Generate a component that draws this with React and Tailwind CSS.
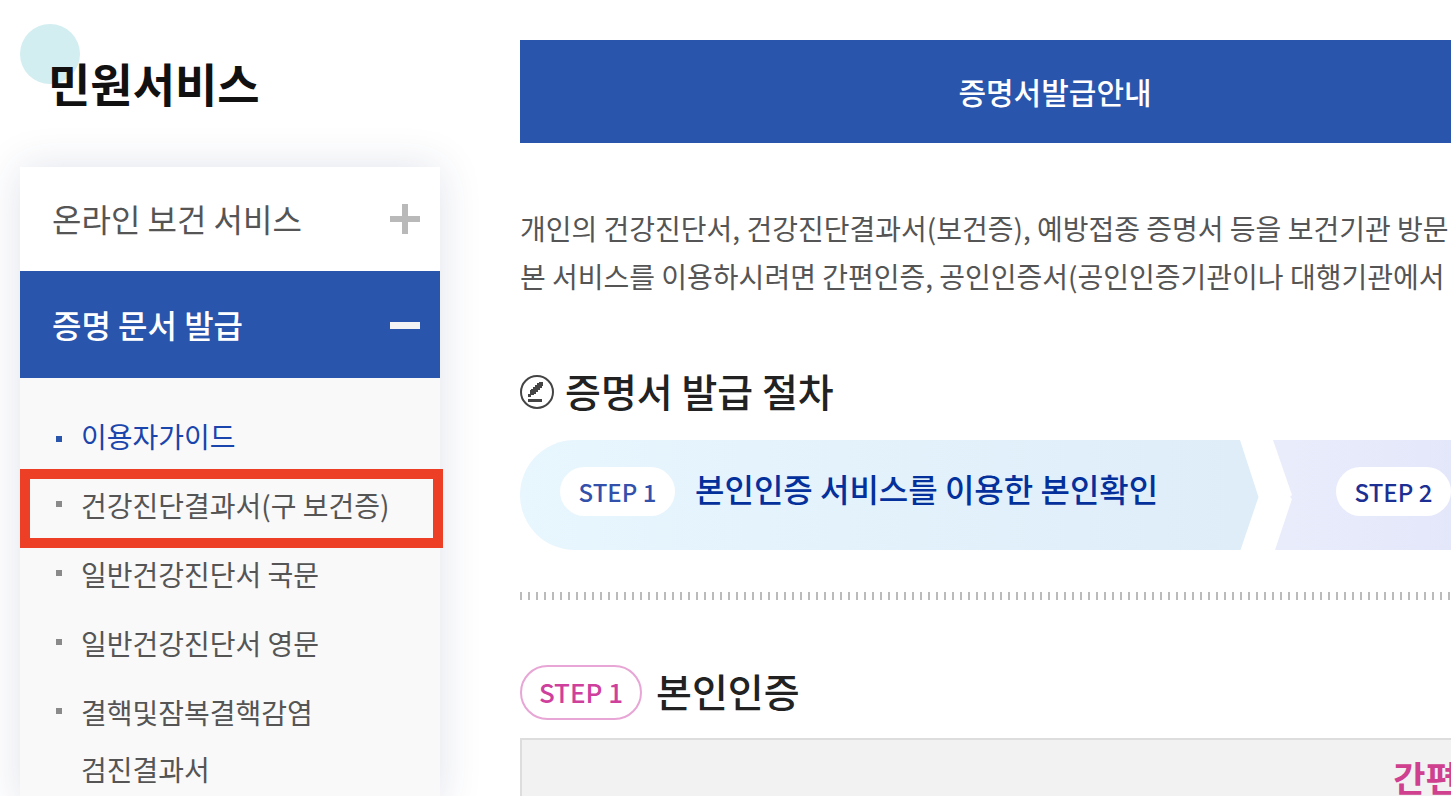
const menuItems = [
  { label: '이용자가이드', active: true },
  { label: '건강진단결과서(구 보건증)', marked: true },
  { label: '일반건강진단서 국문' },
  { label: '일반건강진단서 영문' },
  { label: '결핵및잠복결핵감염 검진결과서' },
];

function MenuItem({ label, active, marked }) {
  return (
    <li className="relative">
      <a href="#" className={`flex items-start gap-[19px] pl-9 pr-24 ${active ? 'text-[#1a45ac]' : 'text-[#555]'}`}>
        <span className={`size-1.5 shrink-0 ${active ? 'mt-7 bg-[#2955ac]' : 'mt-6 bg-[#8a8a8a]'}`} />
        <span className={marked ? 'whitespace-nowrap' : 'break-keep'}>{label}</span>
      </a>
      {marked && (
        <span className="pointer-events-none absolute -top-2 -bottom-[14px] left-0 -right-[3px] border-[10px] border-[#ec3f26]" />
      )}
    </li>
  );
}

function Sidebar() {
  return (
    <aside className="w-[420px] shrink-0 pt-6">
      <div className="relative h-[143px]">
        <span className="absolute left-0 top-0 size-[60px] rounded-full bg-[#d3eef1]" />
        <h2 className="relative pl-7 pt-[26px] text-[46px] leading-[64px] font-bold text-[#111]">민원서비스</h2>
      </div>
      <nav className="min-h-[640px] bg-[#f9f9f9] shadow-[0_0_40px_rgba(40,60,110,0.14)]">
        <button type="button" className="flex h-[104px] w-full items-center justify-between bg-white pl-8 pr-5 text-[32px] text-[#555]">
          <span className="pb-0.5">온라인 보건 서비스</span>
          <svg width="30" height="30" viewBox="0 0 30 30" fill="#b9b9b9" aria-hidden="true">
            <path d="M12 0h6v12h12v6H18v12h-6V18H0v-6h12z" />
          </svg>
        </button>
        <button type="button" className="flex h-[107px] w-full items-center justify-between bg-[#2955ac] pl-8 pr-5 text-[32px] font-medium text-white">
          <span className="pb-0.5">증명 문서 발급</span>
          <svg width="30" height="30" viewBox="0 0 30 30" fill="#f4f4f4" aria-hidden="true">
            <path d="M0 12h30v7H0z" />
          </svg>
        </button>
        <ul className="flex flex-col gap-3 pt-[30px] text-[28px] leading-[57px]">
          {menuItems.map((item) => (
            <MenuItem key={item.label} {...item} />
          ))}
        </ul>
      </nav>
    </aside>
  );
}

function Steps() {
  return (
    <ol className="mt-5 flex h-[110px]">
      <li className="flex w-[720px] shrink-0 items-start gap-5 rounded-l-full bg-linear-to-r from-[#e8f6fe] to-[#deedf8] pl-10 pt-[27px]">
        <span className="flex h-[49px] w-[115px] shrink-0 items-center justify-center rounded-full bg-white text-[24px] font-medium text-[#3350ab]">
          STEP 1
        </span>
        <span className="whitespace-nowrap text-[32px] leading-[42px] font-medium text-[#03309b]">
          본인인증 서비스를 이용한 본인확인
        </span>
      </li>
      <li aria-hidden="true" className="shrink-0">
        <svg width="52" height="110" viewBox="0 0 52 110">
          <path d="M0 0L18.500 57L0.500 110H0z" fill="#deedf8" />
          <path d="M33 0L52 55L50 57L52 59L35 110H52V0z" fill="#e9ecfb" />
        </svg>
      </li>
      <li className="flex flex-1 items-start bg-linear-to-r from-[#e9ecfb] to-[#dfe3f9] pl-11 pt-[27px]">
        <span className="flex h-[49px] w-[115px] shrink-0 items-center justify-center rounded-full bg-white text-[24px] font-medium text-[#1c2f92]">
          STEP 2
        </span>
      </li>
    </ol>
  );
}

export default function App() {
  return (
    <div className="flex h-screen gap-20 overflow-hidden bg-white pl-5 font-['Noto_Sans_CJK_KR','Noto_Sans',sans-serif]">
      <Sidebar />
      <main className="min-w-[1070px] flex-1 pt-10">
        <a href="#" className="flex h-[103px] items-center justify-center bg-[#2955ac] text-[30px] font-medium text-white">
          증명서발급안내
        </a>
        <p className="mt-[61px] whitespace-nowrap text-[28px] leading-[48px] text-[#555]">
          개인의 건강진단서, 건강진단결과서(보건증), 예방접종 증명서 등을 보건기관 방문
          <br />
          본 서비스를 이용하시려면 간편인증, 공인인증서(공인인증기관이나 대행기관에서
        </p>

        <h3 className="mt-16 flex h-14 items-center gap-[11px] text-[39px] leading-[52px] font-medium text-[#222]">
          <svg width="34" height="34" viewBox="0 0 34 34" fill="none" aria-hidden="true">
            <circle cx="17" cy="17" r="16" stroke="#444" strokeWidth="2" />
            <path
              d="M19 7h4v4h-1v2h-2v2h-2v2h-2v2h-2v1h-3v2H8v-3h2v-4h1v-1h2v-2h2v-2h2V8h2z"
              fill="#444"
            />
            <path d="M8 24h14v3H8z" fill="#444" />
          </svg>
          <span className="pb-1">증명서 발급 절차</span>
        </h3>
        <Steps />
        <div className="mt-[42px] h-2 bg-[repeating-linear-gradient(90deg,#bbb_0_2px,transparent_2px_8px)]" />

        <h3 className="mt-[65px] flex h-[55px] items-center gap-[14px] text-[39px] leading-[52px] font-medium text-[#222]">
          <span className="flex h-[55px] w-[122px] items-center justify-center rounded-full border-2 border-[#e7a6d5] pb-0.5 text-[26px] text-[#cf409d]">
            STEP 1
          </span>
          <span className="pb-1.5">본인인증</span>
        </h3>
        <section className="mt-[18px] min-h-40 border-2 border-[#ddd] bg-[#f2f2f2] pr-[66px] pt-[13px] text-right">
          <strong className="text-[35px] leading-[48px] font-bold text-[#cf408f]">간편인증</strong>
        </section>
      </main>
    </div>
  );
}
